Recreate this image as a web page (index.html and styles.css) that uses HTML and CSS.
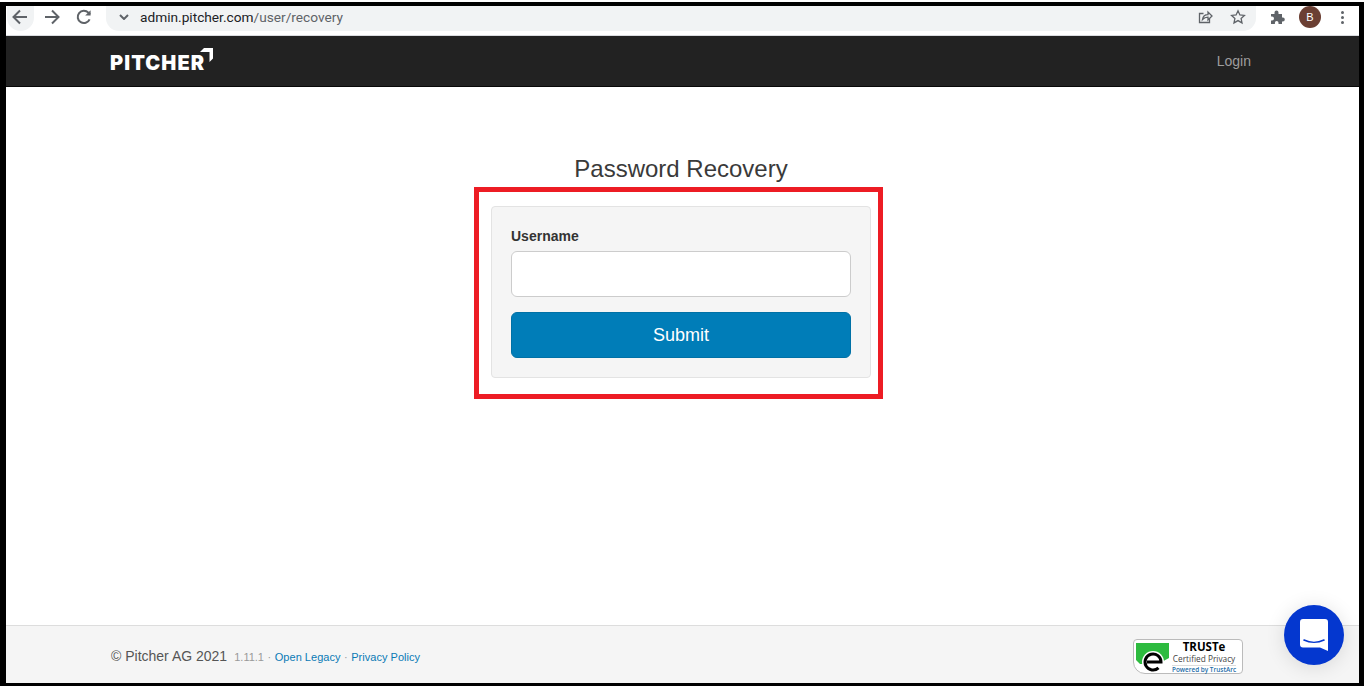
FILE: index.html
```html
<!DOCTYPE html>

<html>

  <head>
    <title>Password Recovery</title>
    <link rel="stylesheet" href="styles.css">
  </head>

  <body>

    <div class="frame">

      <div class="toolbar">
        <div class="nav-icons">
          <span class="back-btn">
            <svg width="18" height="18" viewBox="0 0 18 18"><path d="M16 9H3M9 2.500 2.500 9 9 15.500" class="stroke"/></svg>
          </span>
          <svg class="forward" width="18" height="18" viewBox="0 0 18 18"><path d="M2 9h13M9 2.500 15.500 9 9 15.500" class="stroke"/></svg>
          <svg class="reload" width="18" height="18" viewBox="0 0 18 18"><path d="M14.600 11.400A6.200 6.200 0 1 1 13.400 4.600L15 6.200" class="stroke"/><path d="M15.600 2.200v5.400h-5.400z" class="fill"/></svg>
        </div>
        <div class="omnibox">
          <svg class="chevron" width="10" height="6" viewBox="0 0 10 6"><path d="M1 1l4 4 4-4" class="stroke"/></svg>
          <span class="url"><span class="host">admin.pitcher.com</span>/user/recovery</span>
          <span class="omni-icons">
            <svg width="16" height="16" viewBox="0 0 16 16"><path d="M12.500 9.500v4h-10V4.500h4" class="thin"/><path d="M5.500 10.500c.5-3 2.800-4.800 5.500-4.800V3l4 4-4 4V8.200c-2 0-4 .7-5.500 2.300z" class="thin"/></svg>
            <svg width="16" height="16" viewBox="0 0 16 16"><path d="M8 1.800l1.900 4.100 4.500.5-3.300 3 .9 4.500L8 11.600l-4 2.300.9-4.500-3.300-3 4.500-.5z" class="thin"/></svg>
          </span>
        </div>
        <div class="ext-icons">
          <svg width="16" height="16" viewBox="0 0 16 16"><path d="M1 5h3.500V3.500a2 2 0 0 1 4 0V5H12v3.500h.8a2 2 0 0 1 0 4H12V15H8.500v-1.200a1.800 1.800 0 0 0-3.600 0V15H1v-3.500h1a2 2 0 0 0 0-4H1z" class="fill"/></svg>
          <span class="avatar">B</span>
          <span class="dots"><i></i><i></i><i></i></span>
        </div>
      </div>

      <div class="navbar">
        <div class="brand">
          <span class="brand-name">PITCHER</span>
          <svg class="brand-mark" width="14" height="14" viewBox="0 0 14 14"><path d="M1 4 5 0h9v10.500L10.500 14V4z" fill="#fff"/></svg>
        </div>
        <a class="login" href="#">Login</a>
      </div>

      <div class="content">
        <h1>Password Recovery</h1>
        <div class="highlight">
          <form class="panel">
            <label for="username">Username</label>
            <input id="username" type="text">
            <button type="button">Submit</button>
          </form>
        </div>
      </div>

      <div class="footer">
        <div class="footer-text">
          <span class="copy">© Pitcher AG 2021</span>
          <span class="version">1.11.1</span>
          <span class="sep">·</span>
          <a href="#">Open Legacy</a>
          <span class="sep">·</span>
          <a href="#">Privacy Policy</a>
        </div>
        <div class="truste">
          <svg class="truste-mark" width="38" height="33" viewBox="0 0 38 33">
            <path d="M2 3h33v15L24 24H6L2 20z" fill="#2dbb3f"/>
            <circle cx="19" cy="22" r="11" fill="#fff"/>
            <path d="M13 22H27A8 8 0 1 0 24.500 27.800" fill="none" stroke="#000" stroke-width="3"/>
          </svg>
          <div class="truste-text">
            <b>TRUSTe</b>
            <span>Certified Privacy</span>
            <em>Powered by TrustArc</em>
          </div>
        </div>
      </div>

      <div class="chat">
        <svg width="28" height="32" viewBox="0 0 28 32"><path d="M3 0h22a3 3 0 0 1 3 3v29l-8-3.500H3a3 3 0 0 1-3-3V3a3 3 0 0 1 3-3z" fill="#fff"/><path d="M4 21c6 3 14 3 20 0" fill="none" stroke="#0437cf" stroke-width="1.600" stroke-linecap="round"/></svg>
      </div>

    </div>

  </body>

</html>
```

FILE: styles.css
```css
* {box-sizing: border-box;}

html, body {height: 100%;}

body {
  margin: 0;
  padding-top: 2px;
  background-color: #fff;
  font-family: "Liberation Sans", Arial, sans-serif;
  color: #333;
  overflow: hidden;
}

.frame {
  position: relative;
  display: flex;
  flex-direction: column;
  height: 684px;
  border-style: solid;
  border-color: #000;
  border-width: 4px 5px 3px 6px;
  background-color: #fff;
}

/* browser toolbar */
.toolbar {
  display: flex;
  height: 30px;
  flex: none;
  border-bottom: 1px solid #dadce0;
}

.stroke {fill: none; stroke: #5f6368; stroke-width: 2;}
.thin {fill: none; stroke: #5f6368; stroke-width: 1.3;}
.fill {fill: #5f6368;}

.nav-icons {
  display: flex;
  align-items: flex-start;
  width: 100px;
  flex: none;
}

.back-btn {
  display: flex;
  align-items: center;
  justify-content: center;
  width: 27px;
  height: 25px;
  margin-left: 1px;
  padding: 0 2px 3px 0;
  border-radius: 0 0 14px 14px;
  background-color: #f1f3f4;
}

.forward {margin: 2px 0 0 9px;}
.reload {margin: 2px 0 0 14px;}

.omnibox {
  display: flex;
  align-items: center;
  width: 1150px;
  height: 25px;
  flex: none;
  padding: 0 10px 3px 13px;
  border-radius: 0 0 13px 13px;
  background-color: #f1f3f4;
}

.chevron {margin-right: 11px;}

.url {
  font-family: Roboto, sans-serif;
  font-size: 13.700px;
  color: #5f6368;
}

.host {color: #202124;}

.omni-icons {
  display: flex;
  gap: 17px;
  margin-left: auto;
}

.ext-icons {
  display: flex;
  align-items: flex-start;
  padding: 3px 0 0 14px;
}

.avatar {
  width: 22px;
  height: 22px;
  margin: -3px 0 0 13px;
  border-radius: 50%;
  background-color: #6b3f33;
  color: #fff;
  font-size: 11px;
  line-height: 22px;
  text-align: center;
}

.dots {
  display: flex;
  flex-direction: column;
  gap: 2px;
  margin: 2px 0 0 20px;
}

.dots i {
  width: 3px;
  height: 3px;
  border-radius: 50%;
  background-color: #5f6368;
}

/* site header */
.navbar {
  display: flex;
  align-items: center;
  justify-content: space-between;
  height: 51px;
  flex: none;
  padding: 0 108px 0 104px;
  border-bottom: 1px solid #080808;
  background-color: #222;
}

.brand {
  display: flex;
  align-items: flex-start;
}

.brand-name {
  margin-top: 3px;
  font-family: Inter, sans-serif;
  font-size: 20px;
  font-weight: 900;
  line-height: 24px;
  letter-spacing: 1.100px;
  color: #fff;
}

.brand-mark {margin-left: -6px;}

.login {
  font-size: 14px;
  color: #9d9d9d;
  text-decoration: none;
}

/* main column */
.content {
  display: flex;
  flex-direction: column;
  align-items: center;
  flex: 1;
  padding: 68px 3px 0 0;
}

h1 {
  margin: 0 0 4px;
  font-size: 24px;
  font-weight: 400;
  line-height: 28px;
  color: #3a3a3a;
}

.highlight {
  width: 409px;
  margin-right: 5px;
  padding: 14px 7px 16px 12px;
  border: 5px solid #ed1c24;
}

.panel {
  display: flex;
  flex-direction: column;
  height: 172px;
  padding: 19px;
  border: 1px solid #e3e3e3;
  border-radius: 4px;
  background-color: #f5f5f5;
}

label {
  margin-bottom: 5px;
  font-size: 14px;
  font-weight: 700;
  line-height: 20px;
}

input {
  height: 46px;
  margin-bottom: 15px;
  border: 1px solid #ccc;
  border-radius: 6px;
  background-color: #fff;
}

button {
  height: 46px;
  border: 1px solid #0071a6;
  border-radius: 6px;
  background-color: #007db8;
  color: #fff;
  font-family: inherit;
  font-size: 18px;
}

/* footer */
.footer {
  display: flex;
  align-items: center;
  justify-content: space-between;
  height: 58px;
  flex: none;
  padding: 2px 116px 0 105px;
  border-top: 1px solid #ddd;
  background-color: #f5f5f5;
}

.footer-text {
  font-size: 11px;
  color: #999;
}

.footer-text a {
  color: #0a7ab5;
  text-decoration: none;
  letter-spacing: 0.02px;
}

.copy {
  margin-right: 4px;
  font-size: 14px;
  color: #555;
}

.sep {margin: 0 0.5px;}

.truste {
  display: flex;
  width: 110px;
  height: 35px;
  margin-top: 2px;
  border: 1px solid #bbb;
  border-radius: 4px 4px 4px 12px;
  background-color: #fff;
}

.truste-mark {flex: none;}

.truste-text {
  display: flex;
  flex-direction: column;
  align-items: center;
  flex: 1;
  padding-right: 6px;
  font-family: "Open Sans", sans-serif;
  white-space: nowrap;
}

.truste-text b {
  font-size: 11.500px;
  line-height: 14px;
  color: #000;
}

.truste-text span {
  font-size: 8.300px;
  line-height: 10px;
  color: #444;
}

.truste-text em {
  margin-top: 1px;
  border-top: 1px solid #ddd;
  font-size: 6.400px;
  font-style: normal;
  font-weight: 600;
  line-height: 8px;
  color: #1b6ca8;
}

/* chat launcher */
.chat {
  position: absolute;
  right: 15px;
  bottom: 18px;
  display: flex;
  align-items: center;
  justify-content: center;
  width: 60px;
  height: 60px;
  border-radius: 50%;
  background-color: #0437cf;
  box-shadow: 0 2px 20px rgba(0,0,0,0.12);
}
```
